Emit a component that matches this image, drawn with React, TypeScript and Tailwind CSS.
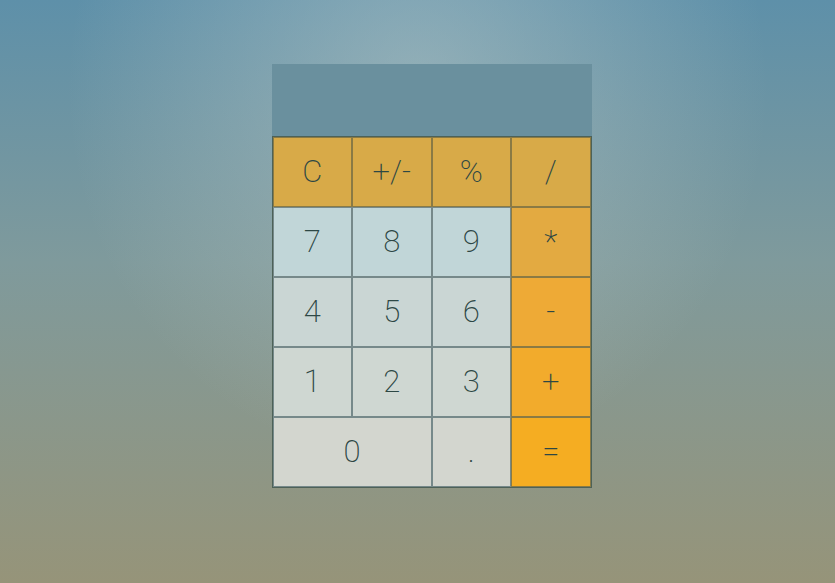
const keys: { label: string; kind: "op" | "num"; wide?: boolean }[] = [
  { label: "C", kind: "op" },
  { label: "+/-", kind: "op" },
  { label: "%", kind: "op" },
  { label: "/", kind: "op" },
  { label: "7", kind: "num" },
  { label: "8", kind: "num" },
  { label: "9", kind: "num" },
  { label: "*", kind: "op" },
  { label: "4", kind: "num" },
  { label: "5", kind: "num" },
  { label: "6", kind: "num" },
  { label: "-", kind: "op" },
  { label: "1", kind: "num" },
  { label: "2", kind: "num" },
  { label: "3", kind: "num" },
  { label: "+", kind: "op" },
  { label: "0", kind: "num", wide: true },
  { label: ".", kind: "num" },
  { label: "=", kind: "op" },
];

// background colour per row, so the gradient runs down the keypad
const numRows = ["", "bg-[#c1d6d8]", "bg-[#cad6d4]", "bg-[#cfd7d2]", "bg-[#d3d6cf]"];
const opRows = ["bg-[#d8aa48]", "bg-[#e3aa41]", "bg-[#eeaa36]", "bg-[#f2ab2c]", "bg-[#f5ad22]"];

const App = () => {
  let col = 0;
  return (
    <div className="w-full min-h-screen h-[583px] bg-[linear-gradient(to_bottom,#5e90a9_0%,#7f9a9c_45%,#969479_100%)] relative overflow-hidden">
      <div className="absolute inset-0 bg-[radial-gradient(ellipse_42%_65%_at_50%_15%,rgba(200,210,205,0.45),rgba(200,210,205,0)_100%)]" />
      <div className="relative flex justify-center pt-16 pl-7">
        <div className="w-[320px] flex flex-col">
          {/* Display */}
          <div className="h-[72px] bg-[#6a909e]" />

          {/* Keypad */}
          <div
            className="grid grid-cols-4 border border-[#4d6258]"
            style={{ fontFamily: "Roboto, 'Liberation Sans', sans-serif" }}
          >
            {keys.map((k, i) => {
              const row = Math.floor(col / 4);
              col += k.wide ? 2 : 1;
              const bg = k.kind === "op" ? opRows[row] : numRows[row];
              return (
                <button
                  key={i}
                  className={`h-[70px] flex items-center justify-center text-[31px] font-extralight text-[#2d4744] border-[0.75px] ${
                    k.kind === "op" ? "border-[#8a7a44]" : "border-[#76898a]"
                  } ${k.wide ? "col-span-2" : ""} ${bg}`}
                >
                  {k.label}
                </button>
              );
            })}
          </div>
        </div>
      </div>
    </div>
  );
};

export default App;
